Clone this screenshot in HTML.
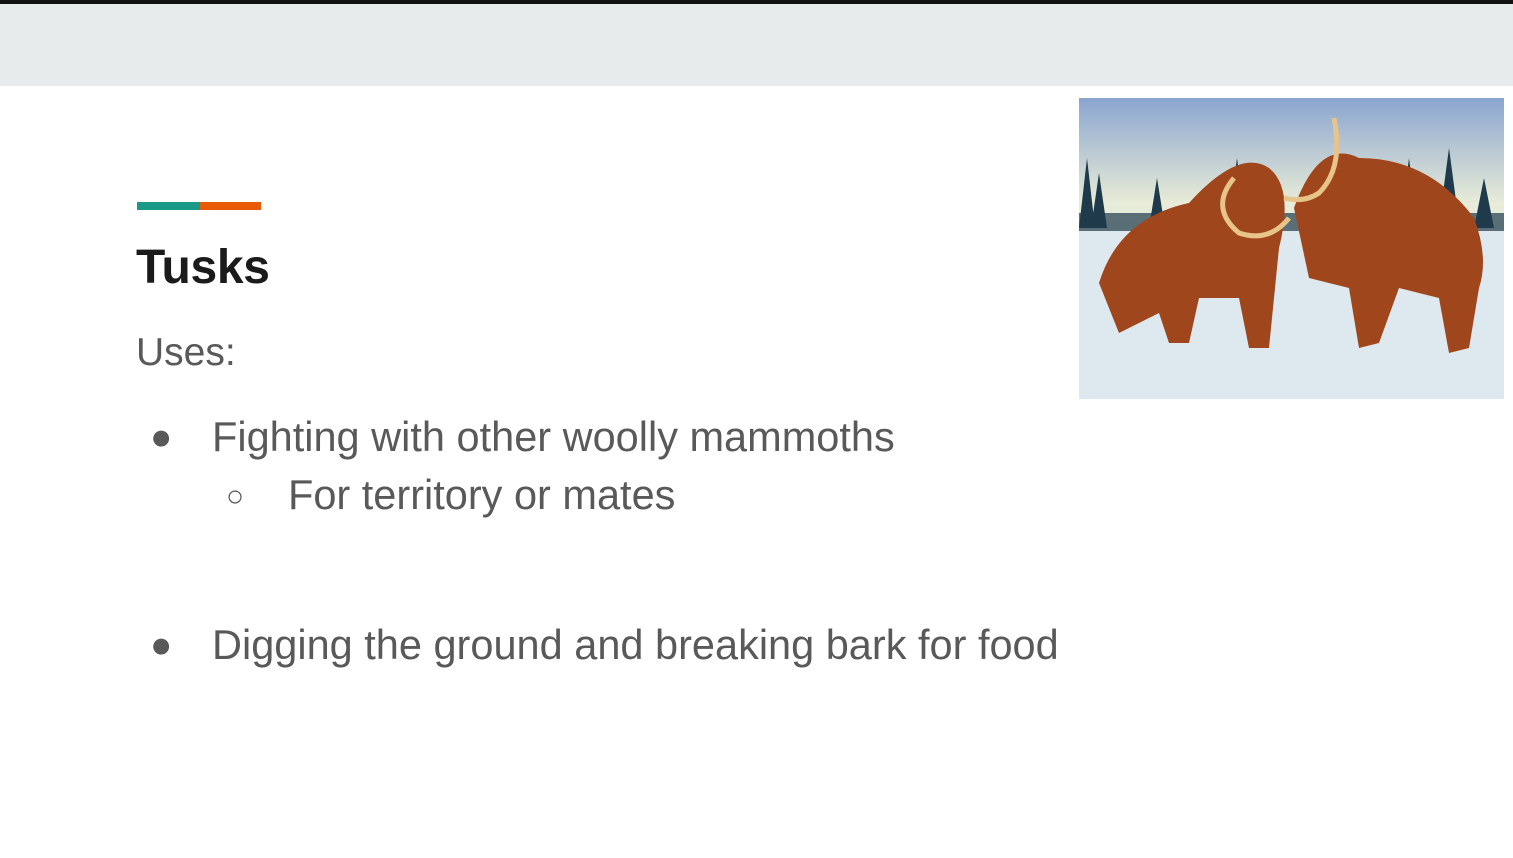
<!DOCTYPE html>
<html><head><style>
body{margin:0;width:1513px;height:858px;position:relative;background:#fff;overflow:hidden;font-family:"Liberation Sans",sans-serif;}
.t{position:absolute;white-space:nowrap;color:#595959;font-size:41.5px;line-height:1;}
</style></head><body>
<div style="position:absolute;left:0;top:0;width:1513px;height:4px;background:#111"></div>
<div style="position:absolute;left:0;top:4px;width:1513px;height:82px;background:#e8ebeb"></div>
<div style="position:absolute;left:137px;top:202px;width:63px;height:8px;background:#1a9986"></div>
<div style="position:absolute;left:200px;top:202px;width:61px;height:8px;background:#e85a06"></div>
<div class="t" style="left:136px;top:244px;font-size:48px;font-weight:bold;color:#1b1b1b;letter-spacing:-0.3px">Tusks</div>
<div class="t" style="left:136px;top:333px;font-size:39px">Uses:</div>
<div class="t" style="left:150px;top:418px;font-size:37px">●</div>
<div class="t" style="left:212px;top:416px">Fighting with other woolly mammoths</div>
<div class="t" style="left:226px;top:482px;font-size:30px">○</div>
<div class="t" style="left:288px;top:474px">For territory or mates</div>
<div class="t" style="left:150px;top:626px;font-size:37px">●</div>
<div class="t" style="left:212px;top:624px">Digging the ground and breaking bark for food</div>
<svg style="position:absolute;left:1079px;top:98px" width="425" height="301" viewBox="0 0 425 301">
<defs><linearGradient id="s" x1="0" y1="0" x2="0" y2="1"><stop offset="0" stop-color="#8aa5cf"/><stop offset="0.35" stop-color="#e8ecd8"/><stop offset="0.45" stop-color="#dfe8e0"/><stop offset="0.5" stop-color="#cfe3ea"/><stop offset="1" stop-color="#e6f0f4"/></linearGradient></defs>
<rect width="425" height="301" fill="url(#s)"/>
<g fill="#1f3a4a">
<polygon points="0,130 8,60 16,130"/><polygon points="12,130 20,75 28,130"/><polygon points="70,130 78,80 86,130"/><polygon points="150,120 158,60 166,120"/><polygon points="168,120 175,75 182,120"/><polygon points="322,125 330,60 338,125"/><polygon points="360,125 370,50 380,125"/><polygon points="395,130 405,80 415,130"/>
<rect x="0" y="115" width="425" height="18" opacity="0.7"/>
</g>
<rect y="133" width="425" height="168" fill="#dde9ef"/>
<g fill="#a0461c">
<path d="M20,185 Q40,120 110,105 Q160,50 190,70 Q215,90 200,150 L190,250 L170,250 L160,200 L120,200 L110,245 L90,245 L80,215 L40,235 Z"/>
<path d="M215,110 Q240,40 280,60 Q350,60 395,120 Q410,160 400,190 L390,250 L370,255 L360,200 L320,190 L300,245 L280,250 L270,190 L230,180 Z"/>
</g>
<g fill="none" stroke="#e6c48a" stroke-width="5">
<path d="M155,80 Q130,110 160,135 Q190,145 210,120"/>
<path d="M255,20 Q265,70 240,95 Q225,105 205,100"/>
</g>
</svg>
</body></html>
